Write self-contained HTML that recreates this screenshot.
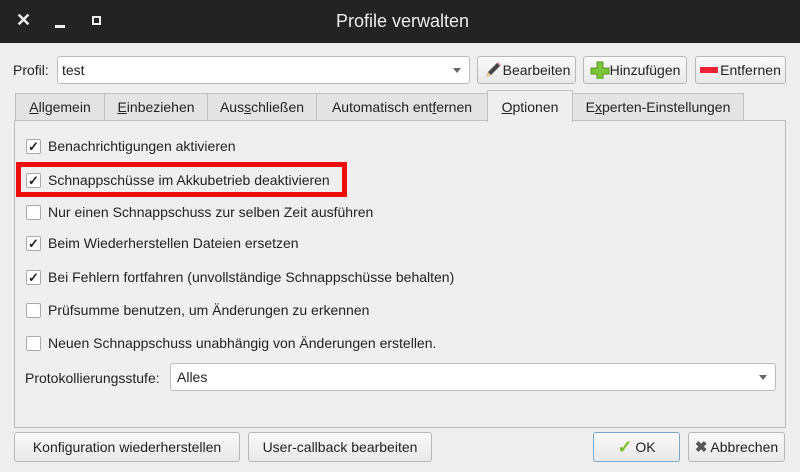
<!DOCTYPE html>
<html><head><meta charset="utf-8"><style>
*{box-sizing:border-box;margin:0;padding:0}
body{width:800px;height:472px;overflow:hidden;background:#efefef;font-family:"Liberation Sans",sans-serif;font-size:14px;color:#222;position:relative}
.a{position:absolute}
.title{left:0;top:0;width:800px;height:43px;background:#232323;color:#eee}
.btn{position:absolute;background:linear-gradient(#fafafa,#e8e8e8);border:1px solid #b8b8b8;border-radius:3px;display:flex;align-items:center;justify-content:center;white-space:nowrap}
.tab{position:absolute;top:93px;height:28px;border:1px solid #c0c0c0;background:#e4e4e4;display:flex;align-items:center;justify-content:center;white-space:nowrap}
.cb{position:absolute;left:26px;width:15px;height:15px;border:1px solid #aaa;background:#fff;border-radius:2px;font-size:13px;line-height:13px;text-align:center;font-weight:bold;color:#222}
.lb{position:absolute;left:48px;white-space:nowrap}
u{text-decoration:underline}
</style></head><body>
<div class="a title">
 <div class="a" style="left:16px;top:10px;font-size:18px;font-weight:bold">✕</div>
 <div class="a" style="left:55px;top:25px;width:10px;height:3px;background:#eee"></div>
 <div class="a" style="left:92px;top:16px;width:9px;height:9px;border:2px solid #eee"></div>
 <div class="a" style="left:336px;top:11px;font-size:18px">Profile verwalten</div>
</div>
<div class="a" style="left:13px;top:62px">Profil:</div>
<div class="a" style="left:57px;top:56px;width:413px;height:28px;background:#fff;border:1px solid #bbb;border-radius:3px;padding:5px 4px">test<span class="a" style="right:8px;top:11px;border:4px solid transparent;border-top:5px solid #666"></span></div>
<div class="btn" style="left:477px;top:56px;width:99px;height:28px"><svg width="20" height="18" viewBox="0 0 20 18"><path d="M3 16 L5 11 L14 2 L17 5 L8 14Z" fill="#444"/><path d="M14 2 L17 5 L18 4 L15 1Z" fill="#e08aa0"/><path d="M3 16 L5 11 L8 14Z" fill="#e9c98a"/></svg>Bearbeiten</div>
<div class="btn" style="left:583px;top:56px;width:104px;height:28px"><svg width="20" height="18" viewBox="0 0 20 18"><path d="M7 1h6v6h6v6h-6v6H7v-6H1V7h6z" fill="#7cc43a" stroke="#5a9a20"/></svg>Hinzufügen</div>
<div class="btn" style="left:695px;top:56px;width:91px;height:28px"><span style="display:inline-block;width:18px;height:6px;background:#e23;margin-right:2px"></span>Entfernen</div>
<div class="a" style="left:14px;top:120px;width:772px;height:308px;border:1px solid #bbb;background:#efefef"></div>
<div class="tab" style="left:15px;width:90px"><u>A</u>llgemein</div>
<div class="tab" style="left:104px;width:104px"><u>E</u>inbeziehen</div>
<div class="tab" style="left:207px;width:110px">Aus<u>s</u>chließen</div>
<div class="tab" style="left:316px;width:172px">Automatisch ent<u>f</u>ernen</div>
<div class="tab" style="left:487px;width:86px;top:90px;height:32px;background:#efefef;border-bottom:none"><u>O</u>ptionen</div>
<div class="tab" style="left:572px;width:172px">E<u>x</u>perten-Einstellungen</div>
<div class="a" style="left:16px;top:162px;width:331px;height:35px;border:5px solid #ee0d0d"></div>
<div class="cb" style="top:139px">✓</div><div class="lb" style="top:138px">Benachrichtigungen aktivieren</div>
<div class="cb" style="top:173px">✓</div><div class="lb" style="top:172px">Schnappschüsse im Akkubetrieb deaktivieren</div>
<div class="cb" style="top:205px"></div><div class="lb" style="top:204px">Nur einen Schnappschuss zur selben Zeit ausführen</div>
<div class="cb" style="top:236px">✓</div><div class="lb" style="top:235px">Beim Wiederherstellen Dateien ersetzen</div>
<div class="cb" style="top:270px">✓</div><div class="lb" style="top:269px">Bei Fehlern fortfahren (unvollständige Schnappschüsse behalten)</div>
<div class="cb" style="top:303px"></div><div class="lb" style="top:302px">Prüfsumme benutzen, um Änderungen zu erkennen</div>
<div class="cb" style="top:336px"></div><div class="lb" style="top:335px">Neuen Schnappschuss unabhängig von Änderungen erstellen.</div>
<div class="a" style="left:25px;top:370px;font-size:14px">Protokollierungsstufe:</div>
<div class="a" style="left:170px;top:363px;width:606px;height:28px;background:#fff;border:1px solid #bbb;border-radius:3px;padding:5px 6px">Alles<span class="a" style="right:8px;top:11px;border:4px solid transparent;border-top:5px solid #666"></span></div>
<div class="btn" style="left:14px;top:432px;width:226px;height:30px">Konfiguration wiederherstellen</div>
<div class="btn" style="left:248px;top:432px;width:184px;height:30px">User-callback bearbeiten</div>
<div class="btn" style="left:593px;top:432px;width:87px;height:30px;border-color:#7aa7c7"><span style="color:#7bbf2a;font-weight:bold;font-size:18px;margin-right:3px">✓</span>OK</div>
<div class="btn" style="left:688px;top:432px;width:97px;height:30px"><span style="color:#555;font-weight:bold;font-size:15px;margin-right:3px">✖</span>Abbrechen</div>
</body></html>
